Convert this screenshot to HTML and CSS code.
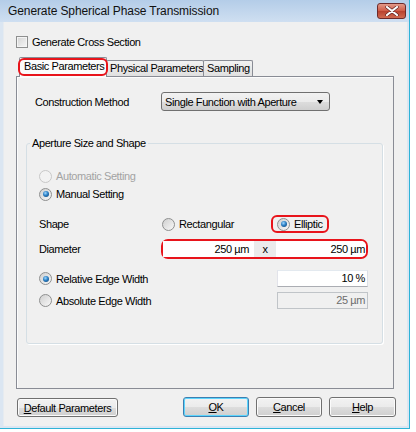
FILE: index.html
```html
<!DOCTYPE html>
<html lang="en">
  <head>
    <meta charset="UTF-8" />
    <meta name="viewport" content="width=device-width, initial-scale=1.0" />
    <title>Generate Spherical Phase Transmission</title>
    <link rel="stylesheet" href="styles.css">
  </head>
  <body>
    <div class="window">
      <div class="titlebar">
        <span class="title">Generate Spherical Phase Transmission</span>
        <span class="close">
          <svg width="14" height="10" viewBox="0 0 14 10">
            <path d="M2 1 L12 9 M12 1 L2 9" stroke="#5a2020" stroke-width="3.4" stroke-linecap="round" />
            <path d="M2 1 L12 9 M12 1 L2 9" stroke="#ffffff" stroke-width="2.2" stroke-linecap="round" />
          </svg>
        </span>
      </div>

      <div class="client">
        <div class="cross"><span class="check"></span>Generate Cross Section</div>

        <div class="tabs">
          <span class="tab active">Basic Parameters</span>
          <span class="tab phys">Physical Parameters</span>
          <span class="tab samp">Sampling</span>
        </div>

        <div class="panel">
          <div class="method">
            <span class="lbl">Construction Method</span>
            <div class="combo">
              <span>Single Function with Aperture</span>
              <span class="arrow"></span>
            </div>
          </div>

          <fieldset class="group">
            <legend>Aperture Size and Shape</legend>
            <div class="row disabled"><span class="radio"></span>Automatic Setting</div>
            <div class="row"><span class="radio on"></span>Manual Setting</div>
            <div class="row shape">
              <span class="lbl">Shape</span>
              <span class="opt"><span class="radio"></span>Rectangular</span>
              <span class="opt mark"><span class="radio on"></span>Elliptic</span>
            </div>
            <div class="row diam">
              <span class="lbl">Diameter</span>
              <div class="pair">
                <span class="field">250 µm</span>
                <span class="times">x</span>
                <span class="field right">250 µm</span>
              </div>
            </div>
            <div class="row edge">
              <span class="radio on"></span>Relative Edge Width
              <span class="field box">10 %</span>
            </div>
            <div class="row edge second">
              <span class="radio"></span>Absolute Edge Width
              <span class="field box off">25 µm</span>
            </div>
          </fieldset>
        </div>

        <div class="buttons">
          <button class="btn wide"><u>D</u>efault Parameters</button>
          <button class="btn ok"><u>O</u>K</button>
          <button class="btn"><u>C</u>ancel</button>
          <button class="btn help"><u>H</u>elp</button>
        </div>
      </div>
    </div>
  </body>
</html>
```

FILE: styles.css
```css
body {
  margin: 0;
  background: #ffffff;
  font-family: "Liberation Sans", Arial, sans-serif;
  font-size: 11px;
  letter-spacing: -0.4px;
  color: #000;
}

/* window frame */
.window {
  width: 410px;
  height: 429px;
  box-sizing: border-box;
  display: flex;
  flex-direction: column;
  background: #dbe6f2;
  border-right: 1px solid #2fb3d6;
  border-bottom: 1px solid #2fb3d6;
}
.titlebar {
  height: 22px;
  flex: none;
  display: flex;
  align-items: center;
  padding: 0 3px 0 8px;
  background: linear-gradient(#b4cde8, #cfdff1);
}
.title {
  font-size: 12px;
  letter-spacing: -0.1px;
  color: #111;
}
.close {
  margin-left: auto;
  width: 27px;
  height: 14px;
  display: flex;
  align-items: center;
  justify-content: center;
  border: 1px solid #6d2a2a;
  border-radius: 3px;
  background: linear-gradient(#e29a8a, #cf5a45 50%, #b8412e 51%, #d06a50);
}
.client {
  flex: 1;
  margin: 0 2px 2px 3px;
  background: #f0f0f0;
  border-left: 1px solid #e6ebf0;
}

/* cross section checkbox */
.cross {
  display: flex;
  align-items: center;
  height: 12px;
  margin: 14px 0 0 12px;
}
.check {
  width: 10px;
  height: 10px;
  margin-right: 4px;
  border: 1px solid #8e8f8f;
  background: linear-gradient(135deg, #d4d4d4, #f6f6f6);
  box-shadow: inset 0 0 0 1px #f4f4f4;
}

/* tabs */
.tabs {
  display: flex;
  align-items: flex-end;
  height: 19px;
  margin: 9px 0 0 15px;
  position: relative;
  z-index: 1;
}
.tab {
  height: 15px;
  box-sizing: border-box;
  padding: 0 3px;
  line-height: 15px;
  border: 1px solid #898c95;
  border-bottom: none;
  border-radius: 2px 2px 0 0;
  background: linear-gradient(#f2f2f2, #e0e0e0);
  margin-left: -1px;
  white-space: nowrap;
}
.tab.active {
  position: relative;
  width: 88px;
  height: 20px;
  line-height: 17px;
  margin: 0 0 -1px 0;
  padding: 0 4px;
  background: #fbfbfb;
  z-index: 1;
}
.tab.phys {
  width: 98px;
  height: 16px;
}
.tab.samp {
  width: 50px;
  height: 16px;
}
.tab.active::after {
  content: "";
  position: absolute;
  top: 0;
  left: -2px;
  right: -2px;
  bottom: 1px;
  border: 2px solid #e8141b;
  border-radius: 6px;
}

.panel {
  width: 378px;
  height: 313px;
  box-sizing: border-box;
  margin-left: 12px;
  border: 1px solid #898c95;
  background: #f0f0f0;
  box-shadow: inset 1px 1px 0 #fcfcfc;
  overflow: hidden;
}

.method {
  display: flex;
  align-items: center;
  height: 19px;
  margin: 15px 0 0 18px;
}
.method .lbl {
  width: 126px;
}
.combo {
  width: 169px;
  height: 19px;
  box-sizing: border-box;
  display: flex;
  align-items: center;
  padding: 0 6px 0 3px;
  border: 1px solid #707070;
  border-radius: 3px;
  background: linear-gradient(#f2f2f2, #ebebeb 50%, #dddddd 51%, #cfcfcf);
}
.arrow {
  margin-left: auto;
  border-left: 3.5px solid transparent;
  border-right: 3.5px solid transparent;
  border-top: 4px solid #000;
}

/* group box */
.group {
  width: 356px;
  height: 207px;
  box-sizing: border-box;
  margin: 26px 0 0 9px;
  padding: 17px 14px 0 12px;
  border: 1px solid #d5dfe5;
  border-radius: 3px;
  box-shadow: 1px 1px 0 #fff;
}
.group legend {
  padding: 0 2px;
  margin-left: -9px;
  line-height: 13px;
}
.row {
  display: flex;
  align-items: center;
  height: 18px;
}
.row.disabled {
  color: #a3a3a3;
}
.row .lbl {
  width: 123px;
  flex: none;
}
.shape {
  margin-top: 12px;
}
.opt {
  display: flex;
  align-items: center;
  width: 109px;
}
.opt.mark {
  width: auto;
  height: 14px;
  padding: 0 4px;
  border: 2px solid #e8141b;
  border-radius: 6px;
}
.diam {
  height: 20px;
  margin-top: 6px;
}
.diam .lbl {
  width: 122px;
}
.pair {
  display: flex;
  height: 16px;
  border: 2px solid #e8141b;
  border-radius: 7px;
}
.field {
  box-sizing: border-box;
  width: 91px;
  height: 16px;
  line-height: 16px;
  padding-right: 5px;
  text-align: right;
  background: #fff;
}
.field.right {
  width: 90px;
  padding-right: 1px;
  border-radius: 0 5px 5px 0;
}
.times {
  width: 22px;
  line-height: 16px;
  text-align: center;
  background: #ebebeb;
}
.edge {
  height: 17px;
  margin-top: 11px;
}
.edge.second {
  margin-top: 5px;
}
.field.box {
  margin-left: auto;
  height: 17px;
  line-height: 15px;
  padding-right: 2px;
  border: 1px solid #abadb3;
  border-top-color: #e3e9ef;
  border-left-color: #e2e3ea;
  border-right-color: #dbdfe6;
}
.field.box.off {
  color: #6d6d6d;
  background: #f0f0f0;
  border-color: #c0c4c8;
}

/* radio buttons */
.radio {
  position: relative;
  flex: none;
  width: 11px;
  height: 11px;
  margin-right: 4px;
  border: 1px solid #8e8f8f;
  border-radius: 50%;
  background: linear-gradient(135deg, #cfcfcf, #f8f8f8);
}
.disabled .radio {
  border-color: #c8c8c8;
  background: #f2f2f2;
}
.radio.on::after {
  content: "";
  position: absolute;
  left: 2.5px;
  top: 2.5px;
  width: 6px;
  height: 6px;
  border-radius: 50%;
  background: radial-gradient(circle at 40% 35%, #9fd8ff, #2b7fc4 45%, #0c3a69);
}

/* buttons */
.buttons {
  display: flex;
  align-items: flex-end;
  gap: 7px;
  width: 379px;
  height: 20px;
  margin: 8px 0 0 13px;
}
.btn {
  width: 66px;
  height: 20px;
  padding: 0;
  font-family: "Liberation Sans", Arial, sans-serif;
  font-size: 11px;
  letter-spacing: -0.4px;
  color: #000;
  border: 1px solid #707070;
  border-radius: 3px;
  background: linear-gradient(#f2f2f2, #ebebeb 50%, #dddddd 51%, #cfcfcf);
  box-shadow: inset 0 0 0 1px #fbfbfb;
}
.btn.wide {
  width: 101px;
  height: 19px;
  margin-right: auto;
}
.btn.ok {
  border-color: #3c7fb1;
  box-shadow: inset 0 0 0 1px #5dd5fd;
}
.btn.help {
  width: 67px;
}
```
